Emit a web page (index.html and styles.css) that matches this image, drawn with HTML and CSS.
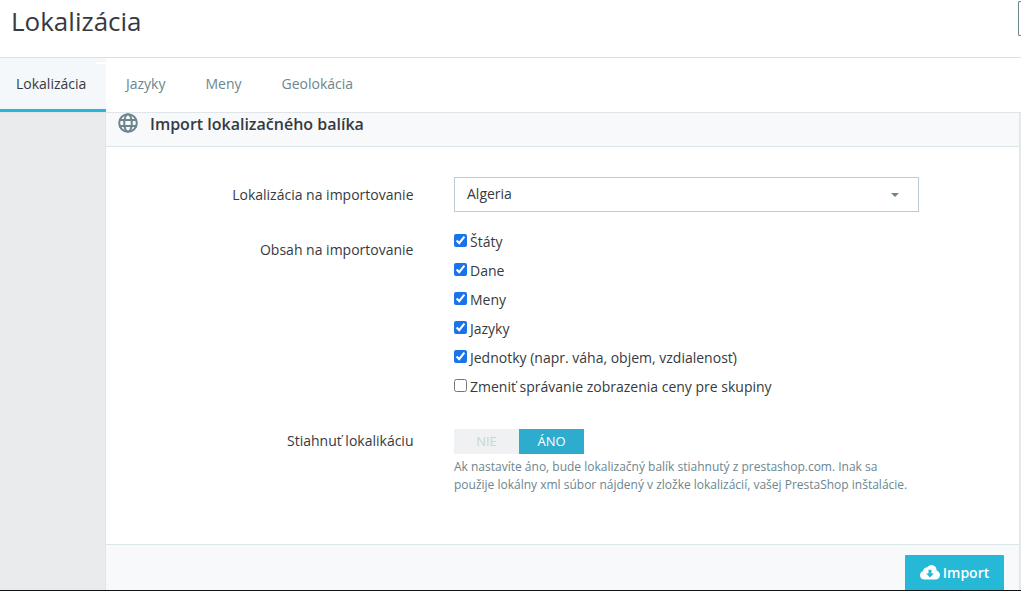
FILE: index.html
```html
<!DOCTYPE html>
<html lang="sk">
<head>
<meta charset="utf-8">
<title>Lokalizácia</title>
<link rel="stylesheet" href="styles.css">
</head>
<body>
<div class="page">
  <header class="head">
    <h1 class="title">Lokalizácia</h1>
    <span class="clip-btn"></span>
  </header>
  <nav class="tabs">
    <a class="tab active">Lokalizácia</a>
    <a class="tab">Jazyky</a>
    <a class="tab">Meny</a>
    <a class="tab">Geolokácia</a>
  </nav>
  <div class="body">
    <aside class="side"></aside>
    <section class="panel">
      <div class="panel-head">
        <svg class="globe" viewBox="0 0 20 20" width="20" height="20" fill="none" stroke="#6c868e" stroke-width="2">
          <circle cx="10" cy="10" r="8.800"/>
          <ellipse cx="10" cy="10" rx="3.800" ry="8.800"/>
          <path d="M1.800 7H18.200M1.800 13H18.200"/>
        </svg>
        <h2 class="panel-title">Import lokalizačného balíka</h2>
      </div>
      <div class="form">
        <div class="row row-select">
          <label class="lab">Lokalizácia na importovanie</label>
          <div class="select"><span>Algeria</span><i class="caret"></i></div>
        </div>
        <div class="row row-checks">
          <label class="lab lab-checks">Obsah na importovanie</label>
          <div class="checks">
            <label class="check"><input type="checkbox" checked>Štáty</label>
            <label class="check"><input type="checkbox" checked>Dane</label>
            <label class="check"><input type="checkbox" checked>Meny</label>
            <label class="check"><input type="checkbox" checked>Jazyky</label>
            <label class="check"><input type="checkbox" checked>Jednotky (napr. váha, objem, vzdialenosť)</label>
            <label class="check"><input type="checkbox">Zmeniť správanie zobrazenia ceny pre skupiny</label>
          </div>
        </div>
        <div class="row row-switch">
          <label class="lab lab-switch">Stiahnuť lokalikáciu</label>
          <div class="switch-col">
            <div class="switch"><span class="off">NIE</span><span class="on">ÁNO</span></div>
            <p class="help">Ak nastavíte áno, bude lokalizačný balík stiahnutý z prestashop.com. Inak sa<br>použije lokálny xml súbor nájdený v zložke lokalizácií, vašej PrestaShop inštalácie.</p>
          </div>
        </div>
      </div>
      <div class="panel-foot">
        <button class="import">
          <svg class="cloud" viewBox="0 0 20 15" width="20" height="15">
            <path fill="#fff" d="M4.600 14.600C2 14.600 0 12.700 0 10.200c0-2 1.300-3.700 3.100-4.200C3.300 3.700 5 2.300 7 2.600 8 1 9.600 0 11.400 0c2.900 0 5.200 2.300 5.200 5.200v.3c2 .7 3.400 2.500 3.400 4.600 0 2.500-2 4.500-4.600 4.500z"/>
            <path fill="#25b9d7" d="M8.500 4.800h3v3.700h2.400L10 12.500 6.100 8.500h2.400z"/>
          </svg>
          Import
        </button>
      </div>
    </section>
  </div>
</div>
</body>
</html>
```
FILE: styles.css
```css
* { box-sizing: border-box; }
html, body { margin: 0; padding: 0; height: 100%; overflow: hidden; }
body { background: #fff; font-family: "Open Sans", sans-serif; color: #363a41; font-size: 14px; border-bottom: 1px solid #111; }
.page { height: 590px; display: flex; flex-direction: column; background: #fff; }
.head { height: 58px; flex: none; border-bottom: 1px solid #dfdfdf; display: flex; justify-content: space-between; align-items: flex-start; padding-left: 11px; }
.title { margin: 2px 0 0; font-size: 26px; font-weight: 400; line-height: 38px; color: #363a41; }
.clip-btn { width: 3px; height: 35px; margin-top: 1px; border: 1px solid #6c868e; border-right: 0; border-radius: 2px 0 0 2px; }
.tabs { height: 55px; flex: none; display: flex; border-bottom: 1px solid #dfe5e8; background: #fff; }
.tab { display: block; padding: 16px 20px 0; font-size: 14px; line-height: 20px; color: #6c868e; }
.tab.active { position: relative; width: 106px; padding-left: 16px; padding-right: 0; height: 54px; color: #363a41; background: #f4f8fb; border-bottom: 3px solid #25b9d7; }
.tab.active::after { content: ""; position: absolute; top: 4px; right: 0; width: 10px; height: 2px; background: #fff; }
.body { flex: 1; display: flex; min-height: 0; background: #eaebec; }
.side { width: 105px; flex: none; }
.panel { flex: 1; display: flex; flex-direction: column; background: #fff; margin-right: 1px; border-left: 1px solid #dfe5e8; border-right: 1px solid #dfe5e8; }
.panel-head { height: 34px; flex: none; display: flex; align-items: flex-start; background: #f8f9fb; border-bottom: 1px solid #dbe6e9; padding-left: 12px; }
.globe { flex: none; }
.panel-title { margin: 0 0 0 12px; font-size: 16px; font-weight: 600; line-height: 22px; color: #363a41; }
.form { flex: 1; padding-top: 30px; }
.row { display: flex; }
.lab { width: 307.5px; flex: none; text-align: right; line-height: 20px; color: #363a41; font-size: 14px; }
.row-select .lab { padding-top: 8px; }
.select { margin-left: 40.5px; width: 465px; height: 35px; border: 1px solid #bbcdd2; display: flex; align-items: center; justify-content: space-between; padding: 0 19px 3px 12px; color: #363a41; }
.caret { width: 0; height: 0; margin-top: 3px; border: 4px solid transparent; border-top: 4px solid #6c868e; border-bottom: 0; }
.row-checks { margin-top: 15px; }
.lab-checks { padding-top: 13px; }
.checks { margin-left: 40.5px; display: flex; flex-direction: column; }
.check { display: flex; align-items: center; height: 29px; line-height: 20px; color: #363a41; }
.check input { margin: 0 3px 2px 0; width: 13px; height: 13px; accent-color: #1a73e8; }
.row-switch { margin-top: 28px; }
.lab-switch { padding-top: 2px; }
.switch-col { margin-left: 40.5px; }
.switch { display: flex; width: 130px; height: 25px; font-size: 13px; line-height: 25px; text-align: center; }
.off { width: 65px; background: #eff1f2; color: #c7d6db; }
.on { width: 65px; background: #2eacce; color: #fff; }
.help { margin: 4px 0 0; font-size: 12px; line-height: 18px; color: #6c868e; white-space: nowrap; }
.panel-foot { height: 46px; flex: none; background: #f8f9fb; border-top: 1px solid #dbe6e9; padding: 10px 15px 0 0; display: flex; justify-content: flex-end; }
.import { width: 99px; height: 35px; border: 0; border-radius: 1px 1px 0 0; background: #25b9d7; color: #fff; font-family: inherit; font-size: 14px; font-weight: 600; display: flex; align-items: center; justify-content: center; gap: 3px; padding: 0; }
.cloud { flex: none; }
```
